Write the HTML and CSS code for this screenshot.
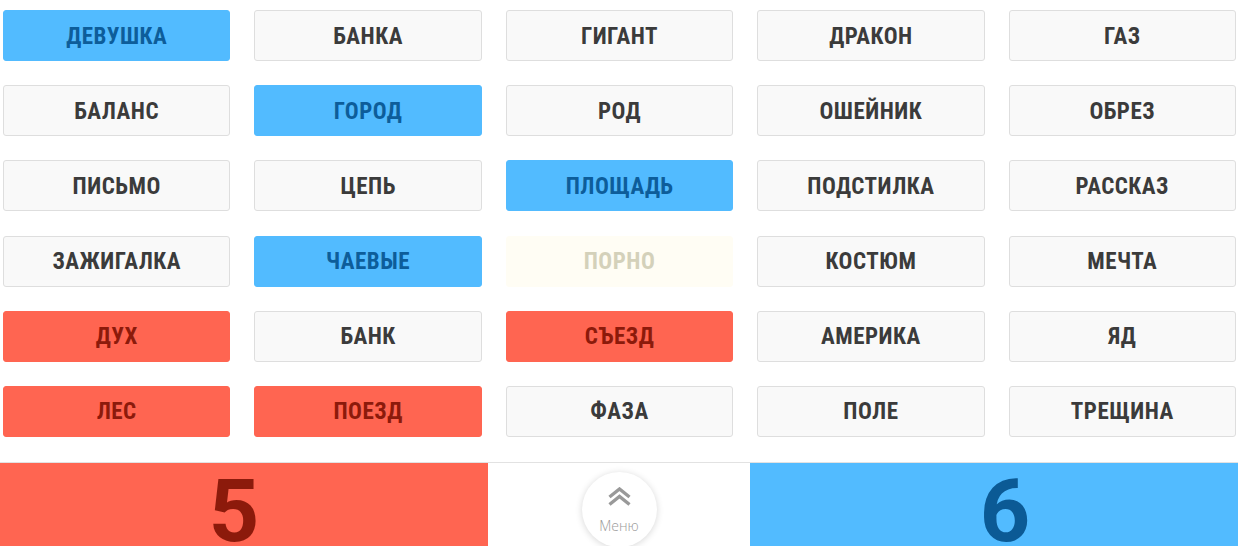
FILE: index.html
```html
<!DOCTYPE html>
<html lang="ru">
<head>
<meta charset="utf-8">
<title>Коднеймс</title>
<link rel="stylesheet" href="styles.css">
</head>
<body>
<div class="board">
  <div class="card blue">ДЕВУШКА</div>
  <div class="card">БАНКА</div>
  <div class="card">ГИГАНТ</div>
  <div class="card">ДРАКОН</div>
  <div class="card">ГАЗ</div>

  <div class="card">БАЛАНС</div>
  <div class="card blue">ГОРОД</div>
  <div class="card">РОД</div>
  <div class="card">ОШЕЙНИК</div>
  <div class="card">ОБРЕЗ</div>

  <div class="card">ПИСЬМО</div>
  <div class="card">ЦЕПЬ</div>
  <div class="card blue">ПЛОЩАДЬ</div>
  <div class="card">ПОДСТИЛКА</div>
  <div class="card">РАССКАЗ</div>

  <div class="card">ЗАЖИГАЛКА</div>
  <div class="card blue">ЧАЕВЫЕ</div>
  <div class="card ghost">ПОРНО</div>
  <div class="card">КОСТЮМ</div>
  <div class="card">МЕЧТА</div>

  <div class="card red">ДУХ</div>
  <div class="card">БАНК</div>
  <div class="card red">СЪЕЗД</div>
  <div class="card">АМЕРИКА</div>
  <div class="card">ЯД</div>

  <div class="card red">ЛЕС</div>
  <div class="card red">ПОЕЗД</div>
  <div class="card">ФАЗА</div>
  <div class="card">ПОЛЕ</div>
  <div class="card">ТРЕЩИНА</div>
</div>
<div class="scorebar">
  <div class="score score-red"><span>5</span></div>
  <div class="middle">
    <div class="menu-btn">
      <svg class="chev" width="23" height="19" viewBox="0 0 23 19">
        <path d="M1.5 10 L11.5 2 L21.5 10" fill="none" stroke="#999999" stroke-width="3.4"/>
        <path d="M1.5 17.5 L11.5 9.5 L21.5 17.5" fill="none" stroke="#999999" stroke-width="3.4"/>
      </svg>
      <span class="menu-label">Меню</span>
    </div>
  </div>
  <div class="score score-blue"><span>6</span></div>
</div>
</body>
</html>
```
FILE: styles.css
```css
html, body {
  margin: 0;
  padding: 0;
  background: #ffffff;
  overflow: hidden;
}
body {
  width: 1238px;
  height: 546px;
  font-family: "Roboto Condensed", "Liberation Sans Narrow", "DejaVu Sans Condensed", Roboto, sans-serif;
}
.board {
  display: grid;
  grid-template-columns: repeat(5, 1fr);
  grid-auto-rows: 51px;
  align-content: start;
  column-gap: 24px;
  row-gap: 24.2px;
  padding: 10px 2px 0 3px;
  height: 462px;
  box-sizing: border-box;
}
.card {
  height: 51px;
  box-sizing: border-box;
  border: 1px solid #dedede;
  border-radius: 3px;
  background: #f9f9f9;
  color: #3b3b3b;
  display: flex;
  align-items: center;
  justify-content: center;
  padding-top: 1px;
  font-weight: 700;
  font-size: 23px;
  font-stretch: condensed;
  letter-spacing: 0.5px;
}
.card.blue {
  background: #52bbff;
  border-color: #52bbff;
  color: #0d5d9a;
}
.card.red {
  background: #ff6551;
  border-color: #ff6551;
  color: #8c1a0b;
}
.card.ghost {
  background: #fffdf4;
  border-color: #fffdf4;
  color: #d4d1ba;
}
.scorebar {
  display: grid;
  grid-template-columns: 488px 262px 488px;
  height: 84px;
  border-top: 1px solid #e2e2e2;
  box-sizing: border-box;
}
.score {
  display: flex;
  justify-content: center;
  align-items: flex-start;
  font-family: Roboto, "Liberation Sans", sans-serif;
  font-weight: 700;
  font-size: 88px;
  line-height: 1;
  padding-top: 4px;
  overflow: hidden;
}
.score-red {
  background: #ff6551;
  color: #8c1a0b;
  padding-right: 20px;
}
.score-blue {
  background: #52bbff;
  color: #0b5a95;
  padding-left: 22px;
}
.middle {
  display: flex;
  justify-content: center;
  padding-top: 9px;
}
.menu-btn {
  width: 75px;
  height: 75px;
  border-radius: 50%;
  background: #ffffff;
  box-shadow: 0 1px 7px rgba(0,0,0,0.16);
  display: flex;
  flex-direction: column;
  align-items: center;
  padding-top: 15px;
  box-sizing: border-box;
}
.chev {
  display: block;
}
.menu-label {
  margin-top: 10px;
  font-family: "Open Sans", Roboto, sans-serif;
  font-weight: 300;
  font-size: 14px;
  color: #9a9a9a;
}
```
